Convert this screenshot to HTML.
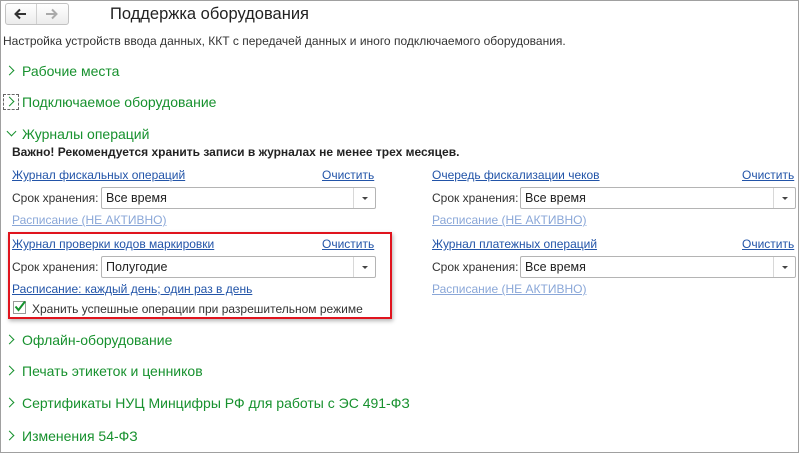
<!DOCTYPE html>
<html><head><meta charset="utf-8"><style>
*{margin:0;padding:0;box-sizing:border-box}
body{width:799px;height:453px;position:relative;overflow:hidden;background:#fff;font-family:"Liberation Sans",Arial,sans-serif;font-size:12px;color:#333}
.frame{position:absolute;left:0;top:0;width:799px;height:453px;border:1px solid #a0a0a0}
.a{position:absolute;white-space:nowrap}
.sec{font-size:14px;color:#17912e}
.chev{position:absolute;width:7px;height:7px;border-right:1.5px solid #17912e;border-bottom:1.5px solid #17912e}
.lnk{color:#2254a8;text-decoration:underline}
.dis{color:#8aa7d8;text-decoration:underline}
.box{position:absolute;height:22px;border:1px solid #b4b4b4;border-radius:2px;background:#fff;font-size:12.5px;color:#222;padding:3px 0 0 4px}
.box i{position:absolute;right:0;top:0;width:22px;height:20px;border-left:1px solid #d8d8d8}
.box i:after{content:"";position:absolute;left:8px;top:9px;border-left:3px solid transparent;border-right:3px solid transparent;border-top:3px solid #444}
.lbl{font-size:12px;color:#333}
</style></head><body>
<div class="frame"></div>
<div class="a" style="left:5px;top:3px;width:64px;height:22px;border:1px solid #c2c2c2;border-radius:3px;background:linear-gradient(#fff,#ececec)"></div>
<div class="a" style="left:36px;top:4px;width:1px;height:20px;background:#d0d0d0"></div>
<svg class="a" style="left:13px;top:8px" width="14" height="12"><path d="M13 6H3M7 1.5L2.5 6 7 10.5" fill="none" stroke="#333" stroke-width="2"/></svg>
<svg class="a" style="left:45px;top:8px" width="14" height="12"><path d="M1 6H11M7 1.5L11.5 6 7 10.5" fill="none" stroke="#aaa" stroke-width="2"/></svg>
<div class="a" style="left:110px;top:5px;font-size:16.5px;color:#222">Поддержка оборудования</div>
<div class="a" style="left:3px;top:34px;font-size:12px;color:#333">Настройка устройств ввода данных, ККТ с передачей данных и иного подключаемого оборудования.</div>

<div class="chev" style="left:6px;top:67px;transform:rotate(-45deg)"></div>
<div class="a sec" style="left:22px;top:63px">Рабочие места</div>
<div class="a" style="left:3px;top:94px;width:16px;height:16px;border:1px dashed #666"></div>
<div class="chev" style="left:6px;top:98px;transform:rotate(-45deg)"></div>
<div class="a sec" style="left:22px;top:94px">Подключаемое оборудование</div>
<div class="chev" style="left:8px;top:128px;transform:rotate(45deg)"></div>
<div class="a sec" style="left:22px;top:126px">Журналы операций</div>
<div class="a" style="left:12px;top:145px;font-weight:bold;color:#222">Важно! Рекомендуется хранить записи в журналах не менее трех месяцев.</div>

<div class="a lnk" style="left:12px;top:168px">Журнал фискальных операций</div>
<div class="a lnk" style="left:322px;top:168px">Очистить</div>
<div class="a lbl" style="left:12px;top:191px">Срок хранения:</div>
<div class="box" style="left:101px;top:187px;width:275px">Все время<i></i></div>
<div class="a dis" style="left:12px;top:213px">Расписание (НЕ АКТИВНО)</div>

<div class="a" style="left:8px;top:232px;width:384px;height:87px;border:2px solid #e0141e;box-shadow:1px 2px 4px rgba(0,0,0,.3)"></div>
<div class="a lnk" style="left:12px;top:237px">Журнал проверки кодов маркировки</div>
<div class="a lnk" style="left:322px;top:237px">Очистить</div>
<div class="a lbl" style="left:12px;top:260px">Срок хранения:</div>
<div class="box" style="left:101px;top:256px;width:275px">Полугодие<i></i></div>
<div class="a lnk" style="left:12px;top:282px">Расписание: каждый день; один раз в день</div>
<div class="a" style="left:13px;top:301px;width:13px;height:13px;border:1px solid #999;background:#fff"></div>
<svg class="a" style="left:13px;top:299px" width="14" height="14"><path d="M2.5 7.5 L5.5 11 L12 2.5" fill="none" stroke="#15922e" stroke-width="2"/></svg>
<div class="a lbl" style="left:32px;top:302px">Хранить успешные операции при разрешительном режиме</div>

<div class="a lnk" style="left:432px;top:168px">Очередь фискализации чеков</div>
<div class="a lnk" style="left:742px;top:168px">Очистить</div>
<div class="a lbl" style="left:432px;top:191px">Срок хранения:</div>
<div class="box" style="left:520px;top:187px;width:276px">Все время<i></i></div>
<div class="a dis" style="left:432px;top:213px">Расписание (НЕ АКТИВНО)</div>
<div class="a lnk" style="left:432px;top:237px">Журнал платежных операций</div>
<div class="a lnk" style="left:742px;top:237px">Очистить</div>
<div class="a lbl" style="left:432px;top:260px">Срок хранения:</div>
<div class="box" style="left:520px;top:256px;width:276px">Все время<i></i></div>
<div class="a dis" style="left:432px;top:282px">Расписание (НЕ АКТИВНО)</div>

<div class="chev" style="left:6px;top:336px;transform:rotate(-45deg)"></div>
<div class="a sec" style="left:22px;top:332px">Офлайн-оборудование</div>
<div class="chev" style="left:6px;top:367px;transform:rotate(-45deg)"></div>
<div class="a sec" style="left:22px;top:363px">Печать этикеток и ценников</div>
<div class="chev" style="left:6px;top:399px;transform:rotate(-45deg)"></div>
<div class="a sec" style="left:22px;top:395px">Сертификаты НУЦ Минцифры РФ для работы с ЭС 491-ФЗ</div>
<div class="chev" style="left:6px;top:432px;transform:rotate(-45deg)"></div>
<div class="a sec" style="left:22px;top:428px">Изменения 54-ФЗ</div>
</body></html>
